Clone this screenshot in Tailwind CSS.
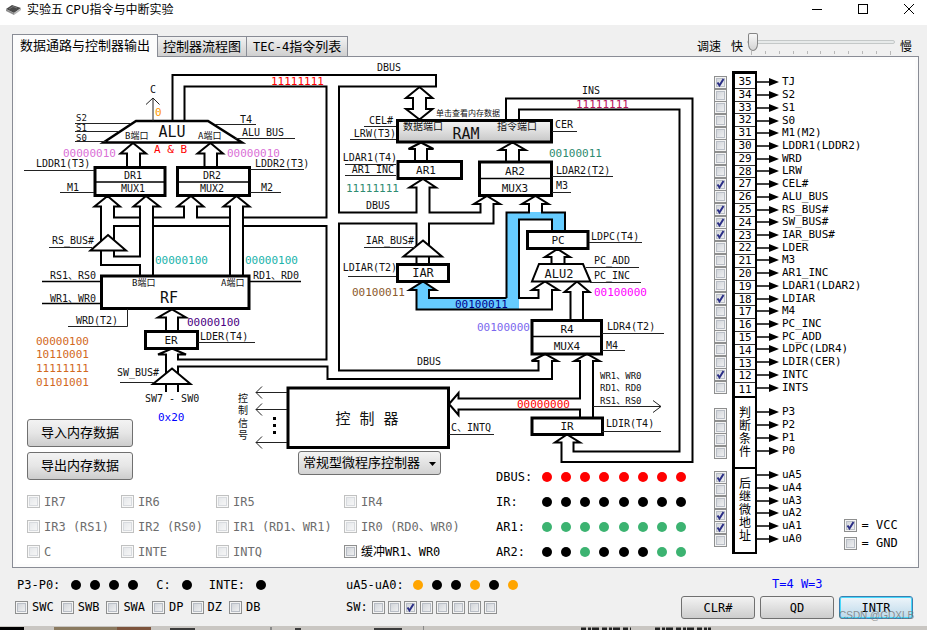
<!DOCTYPE html>
<html lang="zh-CN">
<head>
<meta charset="utf-8">
<title>实验五 CPU指令与中断实验</title>
<script src="https://cdn.jsdelivr.net/npm/@tailwindcss/browser@4"></script>
</head>
<body class="min-h-screen flex flex-col bg-[#f0f0f0] text-black text-xs leading-4 overflow-hidden font-['DejaVu_Sans_Mono','Noto_Sans_CJK_SC',monospace]">

<header class="flex h-[25px] items-start bg-white pl-[6px] pr-[12px]">
  <svg class="mt-[4px] h-[11px] w-[15px]" viewBox="0 0 15 11"><path d="M0 5 L6 1 L15 4 L8 9Z" fill="#4a4a4a"/><path d="M0 5 L8 9 L8 11 L0 7Z" fill="#8d8d8d"/><path d="M8 9 L15 4 L15 6 L8 11Z" fill="#b5b5b5"/><path d="M3 5 L7 2.5 L11 4" stroke="#777" fill="none"/></svg>
  <h1 class="ml-[6px] mt-px flex-1 text-xs leading-4 font-['Noto_Sans_CJK_SC',sans-serif]">实验五 CPU指令与中断实验</h1>
  <div class="mt-[3px] flex gap-[34px]">
    <button aria-label="最小化"><svg width="12" height="12" viewBox="0 0 12 12"><path d="M1 6.5H11" stroke="#000"/></svg></button>
    <button aria-label="最大化"><svg width="12" height="12" viewBox="0 0 12 12"><rect x="1.500" y="1.500" width="9" height="9" fill="none" stroke="#000"/></svg></button>
    <button aria-label="关闭"><svg width="12" height="12" viewBox="0 0 12 12"><path d="M1 1L11 11M11 1L1 11" stroke="#000"/></svg></button>
  </div>
</header>

<div class="flex items-end justify-between pl-[12px] pr-[15px] pt-[8px]">
  <div class="flex items-end text-[13px]" role="tablist">
    <button role="tab" aria-selected="true" class="z-10 -mb-px h-[23px] border border-b-0 border-[#898c95] bg-[#fcfcfc] px-[7px] leading-5">数据通路与控制器输出</button>
    <button role="tab" class="h-[20px] border border-b-0 border-l-0 border-[#898c95] bg-linear-to-b from-[#f2f2f2] to-[#cfcfcf] px-[5px] leading-[18px]">控制器流程图</button>
    <button role="tab" class="h-[20px] border border-b-0 border-l-0 border-[#898c95] bg-linear-to-b from-[#f2f2f2] to-[#cfcfcf] px-[6px] leading-[18px]"><span class="text-xs leading-[18px]">TEC-4</span>指令列表</button>
  </div>
  <div class="flex items-center self-start">
    <label for="speed" class="mt-[4px] mr-[10px]">调速</label>
    <span class="mt-[4px] mr-[4px]">快</span>
    <div class="relative h-[23px] w-[148px]">
      <input id="speed" type="range" min="0" max="10" value="0" class="absolute left-0 top-0 h-[18px] w-full appearance-none bg-transparent [&::-webkit-slider-runnable-track]:h-[4px] [&::-webkit-slider-runnable-track]:rounded-sm [&::-webkit-slider-runnable-track]:border [&::-webkit-slider-runnable-track]:border-[#c4c8c8] [&::-webkit-slider-runnable-track]:bg-[#e7eaea] [&::-webkit-slider-thumb]:-mt-[8px] [&::-webkit-slider-thumb]:h-[18px] [&::-webkit-slider-thumb]:w-[10px] [&::-webkit-slider-thumb]:appearance-none [&::-webkit-slider-thumb]:rounded-[2px_2px_5px_5px/2px_2px_7px_7px] [&::-webkit-slider-thumb]:border [&::-webkit-slider-thumb]:border-[#858585] [&::-webkit-slider-thumb]:bg-linear-to-b [&::-webkit-slider-thumb]:from-[#f8f8f8] [&::-webkit-slider-thumb]:to-[#d4d4d4]">
      <svg class="pointer-events-none absolute left-0 top-[17px]" width="148" height="5" viewBox="0 0 148 5"><path d="M4.500 1V5M18.500 1V4M32.500 1V4M46.500 1V4M60.500 1V4M73.500 1V4M87.500 1V4M101.500 1V4M115.500 1V4M129.500 1V4M143.500 1V5" stroke="#b8b8b8"/></svg>
    </div>
    <span class="mt-[4px] ml-[5px]">慢</span>
  </div>
</div>

<main class="mx-[12px] mr-[8px] border border-[#898c95] bg-[#fcfcfc] p-[3px]">
<div class="flex bg-white">
  <section class="shrink-0">
    <div class="relative">
      <svg class="block h-[404px] w-[684px]" viewBox="16 60 684 404" fill="none" stroke="#000" stroke-width="2">
        <defs><linearGradient id="ram" x1="0" y1="0" x2="0" y2="1"><stop offset="0" stop-color="#f4f4f4"/><stop offset="0.5" stop-color="#dedede"/><stop offset="1" stop-color="#c6c6c6"/></linearGradient></defs>

        <!-- highlighted bus PC to AR2 / IAR -->
        <path stroke="none" fill="#66ccff" d="M506 212H565V232H552V219.500H519V309.500H416.500V290H409.500L423 281.500L436 290H429V298H506Z"/>

        <!-- data bus outlines -->
        <path d="M172.500 121V75H436V86.500H339V212.500H416.500V187.500H409.500L423 179L436 187.500H429.500V212.500H480.500V204H474L487 196L500 204H493.500V223.500H429V247M184.500 121V86.500H326.500V217.500H243M230 217.500H197V206.500H203.500L191 196L177.500 206.500H184V217.500H153"/>
        <path d="M140 217.500H114V206.500H120L107.500 196L94.500 206.500H101V242M114 240V226H140M153 226H230M243 226H326.500V359.500H178V354.500H186L172 348.500L158 354.500H166V373M178 373V366.500H327.500V379H552V361H557.500L545 354L531.500 361H538.500V370.500H339V223.500H416.500V247"/>
        <path d="M101 251V265H140V276M114 251V256.500H140V206.500H133.500L146 196L159.500 206.500H153V276M230 276V206.500H223.500L236.500 196L249.500 206.500H243V276"/>
        <path d="M127 167V153.500H120.500L133 143L146 153.500H140V167M204.500 167V153.500H197.500L210.500 143L223 153.500H217V167"/>
        <path d="M166 331V317.500H158L172 309.500L186 317.500H178V331"/>
        <path d="M413 98H406L419.500 87L432.500 98H426V109H432.500L419.500 119.500L406 109H413Z"/>
        <path d="M415 161V149H408.500L421 142.500L433.500 149H427V161M506 161V150H499.500L512.500 142.500L525.500 150H519V161"/>
        <path d="M506 119V98.500H692.500V462H561.500V442.500H555L567 434.500L580 442.500H573.500V451.500H679.500V109.500H519V119"/>
        <path d="M506.500 298V212.500H529V204H522L535.500 196L548.500 204H542V212.500H565V232M552 232V219.500H519V298H538.500V290H532L545 281.500L558.500 290H552V309.500H416.500V290H409.500L423 281.500L436 290H429V298H506.500"/>
        <path d="M551.500 264V257H545L557.500 249L570 257H564.500V264M570.500 320V292H564.500L577 281.500L589.500 292H583V320"/>
        <path d="M580 417V409.500H458.500V415L449 404L458.500 393V398.500H580V361H574.500L587 354L599.500 361H593V417"/>
        <path d="M416.500 256V264M429 256V264M166 384V392M178 384V392"/>
        <g fill="#fff">
          <path d="M108 235L126 250.500H90.500Z"/><path d="M172 368.500L190.500 384H153Z"/><path d="M423 240.500L442 256.500H403.500Z"/>
          <path stroke-width="2.500" d="M136 121H208L242 142.500H103.500Z"/><path d="M539 264H583L590.500 281.500H532Z"/>
        </g>
        <!-- registers and units -->
        <g stroke-width="3">
          <path d="M95 167.500H165V195.500H95ZM177.500 167.500H249.500V195.500H177.500ZM101.500 276H249V308.500H101.500ZM145.500 331.500H197.500V348.500H145.500ZM398 161.500H461.500V178.500H398ZM479.500 162H551.500V195.500H479.500ZM527.500 231.500H588V248.500H527.500ZM397.500 264.500H448.500V281.500H397.500ZM532 320.500H601.500V354H532ZM532 418H602.500V434.500H532ZM288 388H448.500V447.500H288Z"/>
          <rect x="397.500" y="120.500" width="154" height="21.500" fill="url(#ram)"/>
        </g>
        <path stroke-width="1.500" d="M95 182H165M177.500 182H249.500M479.500 178.500H551.500M532 336.500H601.500"/>

        <!-- signal lines -->
        <g stroke-width="1" stroke="#222">
          <path d="M75 123.500H131M75 131.500H119M75 141.500H106M215 124.500H256M235 138.500H295M24 170.500H94M60 192.500H94M250 169.500H304M250 192.500H281M49 247.500H92M68 326.500H127.500V309M198 342.500H255M120 382.500H154M364 126.500H396M350 139.500H396M345 164.500H396M345 175.500H396M552 131.500H577M552 176.500H613M552 192.500H571M589 242.500H642M586 267.500H639M590 282.500H641M602 333.500H664M602 350.500H625M593 406.500H661M602 431.500H661M449 434.500H494M364 247.500H415M348 276.500H396"/>
          <path d="M153 121V98M146 104.500L153 98L159.500 104.500M287 392.500H256M262 386.500L256 392.500L262 398.500M287 409.500H256M262 403.500L256 409.500L262 415.500M287 442.500H256M262 436.500L256 442.500L262 448.500M653 400.500L661 406.500L653 412.500"/>
        </g>
        <path stroke-width="1.500" d="M42 281.500H101M42 303.500H101M250 281.500H301"/>
        <path stroke="none" fill="#000" d="M273 417h3v3h-3zM273 424h3v3h-3zM273 431h3v3h-3z"/>

        <g stroke="none" fill="#111" class="text-[10px]">
          <text x="150" y="93">C</text>
          <text x="240" y="123">T4</text><text x="242" y="136">ALU_BUS</text>
          <text x="36" y="167">LDDR1(T3)</text><text x="67" y="191">M1</text><text x="255" y="167">LDDR2(T3)</text><text x="261" y="191">M2</text>
          <text x="133" y="179" text-anchor="middle">DR1</text><text x="133" y="192" text-anchor="middle">MUX1</text><text x="212" y="179" text-anchor="middle">DR2</text><text x="212" y="192" text-anchor="middle">MUX2</text>
          <text x="52" y="244">RS_BUS#</text><text x="50" y="279">RS1、RS0</text><text x="50" y="302">WR1、WR0</text><text x="253" y="279">RD1、RD0</text>
          <text x="76" y="324">WRD(T2)</text><text x="200" y="340">LDER(T4)</text><text x="117" y="376">SW_BUS#</text><text x="145" y="402">SW7 - SW0</text>
          <text x="377" y="71">DBUS</text><text x="366" y="209">DBUS</text><text x="417" y="365">DBUS</text><text x="582" y="94">INS</text>
          <text x="369" y="124">CEL#</text><text x="396" y="137" text-anchor="end">LRW(T3)</text><text x="397" y="161" text-anchor="end">LDAR1(T4)</text><text x="394" y="173" text-anchor="end">AR1_INC</text>
          <text x="403" y="130">数据端口</text><text x="497" y="130">指令端口</text>
          <text x="555" y="128">CER</text><text x="556" y="174">LDAR2(T2)</text><text x="556" y="189">M3</text>
          <text x="591" y="240">LDPC(T4)</text><text x="594" y="264">PC_ADD</text><text x="594" y="279">PC_INC</text><text x="607" y="330">LDR4(T2)</text><text x="606" y="349">M4</text>
          <text x="606" y="427">LDIR(T4)</text><text x="451" y="431">C、INTQ</text><text x="414" y="244" text-anchor="end">IAR_BUS#</text><text x="397" y="271" text-anchor="end">LDIAR(T2)</text>
          <text x="238" y="402">控</text><text x="238" y="414">制</text><text x="238" y="427">信</text><text x="238" y="439">号</text>
        </g>
        <g stroke="none" fill="#111" class="text-[9px]">
          <text x="76" y="121">S2</text><text x="76" y="131">S1</text><text x="76" y="141">S0</text>
          <text x="125" y="139">B端口</text><text x="198" y="139">A端口</text><text x="132" y="286">B端口</text><text x="221" y="286">A端口</text>
          <text x="600" y="379">WR1、WR0</text><text x="600" y="391">RD1、RD0</text><text x="600" y="404">RS1、RS0</text>
        </g>
        <text stroke="none" fill="#111" class="text-[8px]" x="436" y="116">单击查看内存数据</text>
        <g stroke="none" fill="#111" class="text-[11px]" text-anchor="middle">
          <text x="171" y="344">ER</text><text x="426" y="174">AR1</text><text x="515" y="175">AR2</text><text x="515" y="192">MUX3</text>
          <text x="558" y="244">PC</text><text x="567" y="333">R4</text><text x="567" y="350">MUX4</text><text x="567" y="430">IR</text>
        </g>
        <g stroke="none" fill="#111" class="text-[12px]" text-anchor="middle"><text x="423" y="277">IAR</text><text x="559" y="278">ALU2</text></g>
        <g stroke="none" fill="#111" class="text-[15px]" text-anchor="middle"><text x="172" y="137">ALU</text><text x="466" y="139">RAM</text><text x="169" y="303">RF</text><text x="367" y="424">控 制 器</text></g>

        <!-- live register values -->
        <g stroke="none" class="text-[11px]">
          <text x="155" y="116" fill="#ff9900">0</text>
          <text x="154" y="153" fill="#ff0000">A &amp; B</text>
          <text x="63" y="157" fill="#da70d6">00000010</text><text x="227" y="157" fill="#da70d6">00000010</text>
          <text x="271" y="85" fill="#ff0000">11111111</text><text x="576" y="108" fill="#b8125a">11111111</text>
          <text x="346" y="192" fill="#2e8b70">11111111</text><text x="549" y="157" fill="#2e8b70">00100011</text>
          <text x="155" y="264" fill="#20b2aa">00000100</text><text x="245" y="264" fill="#20b2aa">00000100</text>
          <text x="187" y="326" fill="#4b0082">00000100</text><text x="352" y="296" fill="#8b5a2b">00100011</text>
          <text x="455" y="308" fill="#00008b">00100011</text><text x="594" y="296" fill="#ff00ff">00100000</text>
          <text x="477" y="331" fill="#7b68ee">00100000</text><text x="517" y="408" fill="#ff0000">00000000</text>
          <text x="36" y="345" fill="#d2691e">00000100</text><text x="36" y="358" fill="#d2691e">10110001</text><text x="36" y="372" fill="#d2691e">11111111</text><text x="36" y="386" fill="#d2691e">01101001</text>
          <text x="158" y="421" fill="#0000ff">0x20</text>
        </g>
      </svg>
      <!-- controls placed on the diagram -->
      <div class="absolute left-[11px] top-[359px] flex flex-col gap-[5px] text-[13px]">
        <button class="h-[28px] rounded-[3px] border border-[#707070] bg-linear-to-b from-[#f3f3f3] via-[#e6e6e6] to-[#cdcdcd] px-[13px]">导入内存数据</button>
        <button class="h-[28px] rounded-[3px] border border-[#707070] bg-linear-to-b from-[#f3f3f3] via-[#e6e6e6] to-[#cdcdcd] px-[13px]">导出内存数据</button>
      </div>
      <div class="absolute left-[282px] top-[391px] text-[13px]">
        <select aria-label="控制器类型" class="h-[24px] w-[143px] appearance-none rounded-[3px] border border-[#707070] bg-linear-to-b from-[#f3f3f3] to-[#d2d2d2] pl-[4px]"><option>常规型微程序控制器</option></select>
        <svg class="pointer-events-none absolute right-[5px] top-[11px]" width="7" height="4" viewBox="0 0 7 4"><path d="M0 0H7L3.500 4Z"/></svg>
      </div>
    </div>

    <div class="flex">
      <div id="flags" class="mt-[25px] grid w-[480px] auto-rows-[25px] grid-cols-[94px_95px_128px_auto] items-center pl-[11px]"></div>
      <div id="buses" class="grid auto-rows-[25px] items-center"></div>
    </div>
  </section>

  <section class="flex pl-[14px] pt-[11px]">
    <div class="flex flex-col pt-[5px]">
      <div id="c1" class="grid h-[318px] auto-rows-fr items-center"></div>
      <div id="c2" class="mt-[14px] grid h-[51px] auto-rows-fr items-center"></div>
      <div id="c3" class="mt-[12px] grid h-[76px] auto-rows-fr items-center"></div>
    </div>
    <div class="ml-[5px] flex w-[25px] flex-col self-start border-[3px] border-r-2 border-b-2 border-black text-center">
      <div id="nums" class="grid h-[322px] auto-rows-fr pt-[2px] text-[11px] leading-3"></div>
      <div class="h-[71px] border-t-2 border-black pt-[9px] text-xs leading-[13px] px-[4px] break-all">判断条件</div>
      <div class="h-[85px] border-t-2 border-black pt-[9px] text-xs leading-[13px] px-[4px] break-all">后继微地址</div>
    </div>
    <div class="flex flex-col pt-[5px] text-[11px] leading-3">
      <div id="l1" class="grid h-[318px] auto-rows-fr items-center"></div>
      <div id="l2" class="mt-[12px] grid h-[51px] auto-rows-fr items-center"></div>
      <div id="l3" class="mt-[12px] grid h-[76px] auto-rows-fr items-center"></div>
    </div>
    <div id="legend" class="-ml-[17px] flex flex-col justify-end gap-[2px] pb-[13px]"></div>
  </section>
</div>
</main>

<footer class="flex h-[58px] justify-between pl-[15px] pr-[14px]">
  <div class="flex gap-[80px]">
    <div class="flex flex-col pt-[9px]">
      <div class="flex h-4 items-center gap-[11px] pl-[2px]">P3-P0:<span data-dots="kkkk"></span><span class="ml-[7px]">C:</span><span data-dots="k"></span><span class="ml-[6px]">INTE:</span><span data-dots="k"></span></div>
      <div id="sw1" class="mt-[6px] flex items-center gap-[7px]"></div>
    </div>
    <div class="flex flex-col pt-[9px]">
      <div class="flex h-4 items-center gap-[9px]">uA5-uA0:<span data-dots="okkoko"></span></div>
      <div class="mt-[6px] flex items-center gap-[4px]">SW:<span id="sw2" class="flex gap-[3px]"></span></div>
    </div>
  </div>
  <div class="flex flex-col pt-[8px]">
    <p class="pl-[91px] text-[#0000ff]">T=4 W=3</p>
    <div class="mt-[4px] flex gap-[5px]">
      <button class="h-[23px] w-[74px] rounded-[3px] border border-[#707070] bg-linear-to-b from-[#f3f3f3] to-[#cdcdcd]">CLR#</button>
      <button class="h-[23px] w-[74px] rounded-[3px] border border-[#707070] bg-linear-to-b from-[#f3f3f3] to-[#cdcdcd]">QD</button>
      <div class="relative">
        <button class="h-[23px] w-[74px] rounded-[3px] border border-[#3c7fb1] bg-linear-to-b from-[#eef5fa] to-[#bcd9ea] shadow-[inset_0_0_0_1px_#46d8fb]">INTR</button>
        <span class="pointer-events-none absolute left-0 top-[14px] text-[10px] leading-3 whitespace-nowrap text-[#777]/80 font-['Liberation_Sans',sans-serif]">CSDN @GDXLB</span>
      </div>
    </div>
  </div>
</footer>
<svg class="block h-[4px] w-full" viewBox="0 0 927 4" preserveAspectRatio="none"><path fill="#c9c6c2" d="M0 0H927V4H0z"/><path fill="#000" d="M0 1H24V4H0z"/><path fill="#8a7a60" d="M54 1H117V4H54z"/><path fill="#7d543d" d="M117 1H151V4H117z"/><path fill="#3b3b3b" d="M170 2H195V4H170zM295 2H301V4H295zM374 2H402V4H374z"/><path fill="#888" d="M270 1H272V4H270zM423 0H424V4H423z"/><path fill="none" stroke="#222" stroke-width="3" stroke-dasharray="5 2 3 1 7 3" d="M581 3H631M655 3H711"/></svg>

<script>
const $ = id => document.getElementById(id);
let n = 0;
// Check box; mode: 1 checked, 0 clear, -1 disabled
const box = (name, mode) => {
  const id = 'k' + (++n);
  return { id, html: `<span class="inline-grid shrink-0"><input type="checkbox" id="${id}" aria-label="${name}" ${mode === 1 ? 'checked' : ''} ${mode === -1 ? 'disabled' : ''} class="peer col-start-1 row-start-1 h-[13px] w-[13px] appearance-none border border-[#8e8f8f] bg-linear-to-br from-[#cbcfd5] to-[#f6f6f6] shadow-[inset_0_0_0_1px_#f4f4f4,inset_0_0_0_2px_#b9bec6] disabled:opacity-55"><svg class="pointer-events-none col-start-1 row-start-1 hidden h-[13px] w-[13px] peer-checked:block" viewBox="0 0 13 13"><path d="M3.500 6.500L5.500 9.500L9.500 3" fill="none" stroke="#2b2f86" stroke-width="2"/></svg></span>` };
};
const color = { r: '#ff0000', k: '#000000', g: '#3cb371', o: '#ffa500' };
const dot = c => `<svg width="10" height="10" viewBox="0 0 10 10"><circle cx="5" cy="5" r="5" fill="${color[c]}"/></svg>`;

$('flags').innerHTML = ['IR7','IR6','IR5','IR4','IR3 (RS1)','IR2 (RS0)','IR1 (RD1、WR1)','IR0 (RD0、WR0)','C','INTE','INTQ','缓冲WR1、WR0'].map((t, i) => {
  const b = box(t, i === 11 ? 0 : -1);
  return `<div class="flex items-center gap-[4px] whitespace-nowrap">${b.html}<label for="${b.id}" class="${i === 11 ? 'text-black' : 'text-[#6d6d6d]'}">${t}</label></div>`;
}).join('');
$('buses').innerHTML = [['DBUS','rrrrrrrr'],['IR','kkkkkkkk'],['AR1','gggggggg'],['AR2','kkgkkkgg']].map(([t, d]) =>
  `<div class="flex items-center"><span class="w-[41px]">${t}:</span><span class="grid w-[154px] grid-cols-8 justify-items-center">${[...d].map(dot).join('')}</span></div>`).join('');

const groups = [
  ['TJ*','S2','S1','S0','M1(M2)','LDDR1(LDDR2)','WRD','LRW','CEL#*','ALU_BUS','RS_BUS#*','SW_BUS#*','IAR_BUS#*','LDER','M3','AR1_INC','LDAR1(LDAR2)','LDIAR*','M4','PC_INC','PC_ADD','LDPC(LDR4)','LDIR(CER)','INTC*','INTS'],
  ['P3','P2','P1','P0'],
  ['uA5*','uA4','uA3','uA2*','uA1*','uA0']
];
groups.forEach((g, i) => {
  const items = g.map(s => { const t = s.replace('*', ''); return { t, b: box(t, s.endsWith('*') ? 1 : 0) }; });
  $('c' + (i + 1)).innerHTML = items.map(x => `<div class="flex h-3 items-center">${x.b.html}</div>`).join('');
  $('l' + (i + 1)).innerHTML = items.map(x => `<label for="${x.b.id}" class="flex h-3 items-center gap-[3px] whitespace-nowrap"><svg class="shrink-0" width="22" height="8" viewBox="0 0 22 8"><path d="M0 4H12" stroke="#000" stroke-width="1.500"/><path d="M12 0L22 4L12 8Z"/></svg>${x.t}</label>`).join('');
});
$('nums').innerHTML = groups[0].map((_, i) => `<div class="flex items-center justify-center border-b border-[#333] last:border-b-0">${35 - i}</div>`).join('');
$('legend').innerHTML = [['VCC', 1], ['GND', 0]].map(([t, m]) => { const b = box(t, m); return `<div class="flex items-center gap-[4px] whitespace-pre">${b.html}<label for="${b.id}">= ${t}</label></div>`; }).join('');
$('sw1').innerHTML = ['SWC','SWB','SWA','DP','DZ','DB'].map(t => { const b = box(t, 0); return `<span class="flex items-center gap-[4px]">${b.html}<label for="${b.id}">${t}</label></span>`; }).join('');
$('sw2').innerHTML = [0,0,1,0,0,0,0,0].map((m, i) => box('SW' + (7 - i), m).html).join('');
document.querySelectorAll('[data-dots]').forEach(e => { e.className = 'flex gap-[9px]'; e.innerHTML = [...e.dataset.dots].map(dot).join(''); });
</script>
</body>
</html>
